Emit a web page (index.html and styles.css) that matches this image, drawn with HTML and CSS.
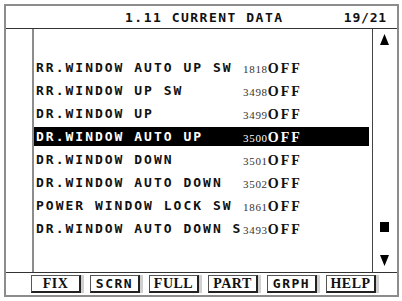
FILE: index.html
```html
<!DOCTYPE html>
<html lang="en">
<head>
  <meta charset="UTF-8" />
  <title>1.11 Current Data</title>
  <link rel="stylesheet" href="styles.css">
</head>
<body>
  <div class="screen">
    <div class="title-bar">
      <span class="title">1.11 CURRENT DATA</span>
      <span class="page">19/21</span>
    </div>

    <div class="main">
      <div class="gutter"></div>

      <ul class="list">
        <li class="row"></li>
        <li class="row"><span class="label">RR.WINDOW AUTO UP SW</span><span class="value"><span class="num">1818</span><span class="state">OFF</span></span></li>
        <li class="row"><span class="label">RR.WINDOW UP SW</span><span class="value"><span class="num">3498</span><span class="state">OFF</span></span></li>
        <li class="row"><span class="label">DR.WINDOW UP</span><span class="value"><span class="num">3499</span><span class="state">OFF</span></span></li>
        <li class="row active"><span class="label">DR.WINDOW AUTO UP</span><span class="value"><span class="num">3500</span><span class="state">OFF</span></span></li>
        <li class="row"><span class="label">DR.WINDOW DOWN</span><span class="value"><span class="num">3501</span><span class="state">OFF</span></span></li>
        <li class="row"><span class="label">DR.WINDOW AUTO DOWN</span><span class="value"><span class="num">3502</span><span class="state">OFF</span></span></li>
        <li class="row"><span class="label">POWER WINDOW LOCK SW</span><span class="value"><span class="num">1861</span><span class="state">OFF</span></span></li>
        <li class="row"><span class="label">DR.WINDOW AUTO DOWN S</span><span class="value"><span class="num">3493</span><span class="state">OFF</span></span></li>
      </ul>

      <div class="scroll">
        <svg class="arrow" width="9" height="11" viewBox="0 0 9 11"><polygon points="4.5,0 9,11 0,11" fill="#000"/></svg>
        <svg class="thumb" width="9" height="10" viewBox="0 0 9 10"><rect width="9" height="10" fill="#000"/></svg>
        <svg class="arrow down" width="9" height="11" viewBox="0 0 9 11"><polygon points="0,0 9,0 4.5,11" fill="#000"/></svg>
      </div>
    </div>

    <div class="buttons">
      <span class="btn">FIX</span>
      <span class="btn mono">SCRN</span>
      <span class="btn">FULL</span>
      <span class="btn">PART</span>
      <span class="btn mono">GRPH</span>
      <span class="btn">HELP</span>
    </div>
  </div>
</body>
</html>
```

FILE: styles.css
```css
* {
  margin: 0;
  padding: 0;
  box-sizing: border-box;
}

body {
  background: #fff;
  color: #111;
  font-family: "DejaVu Sans Mono", monospace;
}

.screen {
  margin: 4px 0 0 4px;
  width: 395px;
  height: 293px;
  border: 2px solid #8c8c8c;
  display: flex;
  flex-direction: column;
}

/* header */
.title-bar {
  height: 23px;
  display: flex;
  align-items: center;
  padding: 0 10px 0 119px;
  border-bottom: 1px solid #333;
  font-size: 13px;
  font-weight: bold;
}

.title {
  letter-spacing: 1.5px;
}

.page {
  margin-left: auto;
  letter-spacing: 0.8px;
}

/* data list */
.main {
  flex: 1;
  display: flex;
}

.gutter {
  width: 28px;
  border-right: 2px solid #8c8c8c;
}

.list {
  flex: 1;
  list-style: none;
  padding: 6px 3px 0 0;
}

.row {
  height: 19px;
  margin-bottom: 4px;
  padding-left: 2px;
  display: flex;
  align-items: center;
  white-space: nowrap;
}

.row.active {
  background: #000;
  color: #fff;
}

.label {
  flex: none;
  width: 207px;
  font-size: 13px;
  font-weight: bold;
  letter-spacing: 2px;
}

.num {
  font-family: "Liberation Serif", serif;
  font-size: 11px;
  letter-spacing: 0.7px;
  color: #333;
}

.row.active .num {
  color: #fff;
}

.state {
  font-family: "Liberation Serif", serif;
  font-size: 14px;
  font-weight: bold;
  letter-spacing: 2px;
}

/* scrollbar */
.scroll {
  width: 25px;
  border-left: 1px solid #444;
  display: flex;
  flex-direction: column;
  align-items: center;
  padding: 5px 1px 6px 0;
}

.thumb {
  margin-top: auto;
}

.arrow.down {
  margin-top: 23px;
}

/* function keys */
.buttons {
  height: 23px;
  border-top: 1px solid #333;
  display: flex;
  align-items: center;
  gap: 9px;
  padding-left: 25px;
}

.btn {
  width: 50px;
  height: 18px;
  border: 1px solid #555;
  border-right: 2px solid #222;
  border-bottom: 2px solid #222;
  box-shadow: 3px 0 0 #d0d0d0;
  display: flex;
  align-items: center;
  justify-content: center;
  font-family: "Liberation Serif", serif;
  font-size: 14px;
  font-weight: bold;
  letter-spacing: 0.5px;
}

.btn.mono {
  font-family: "DejaVu Sans Mono", monospace;
  font-size: 13px;
  letter-spacing: 1.5px;
}
```
